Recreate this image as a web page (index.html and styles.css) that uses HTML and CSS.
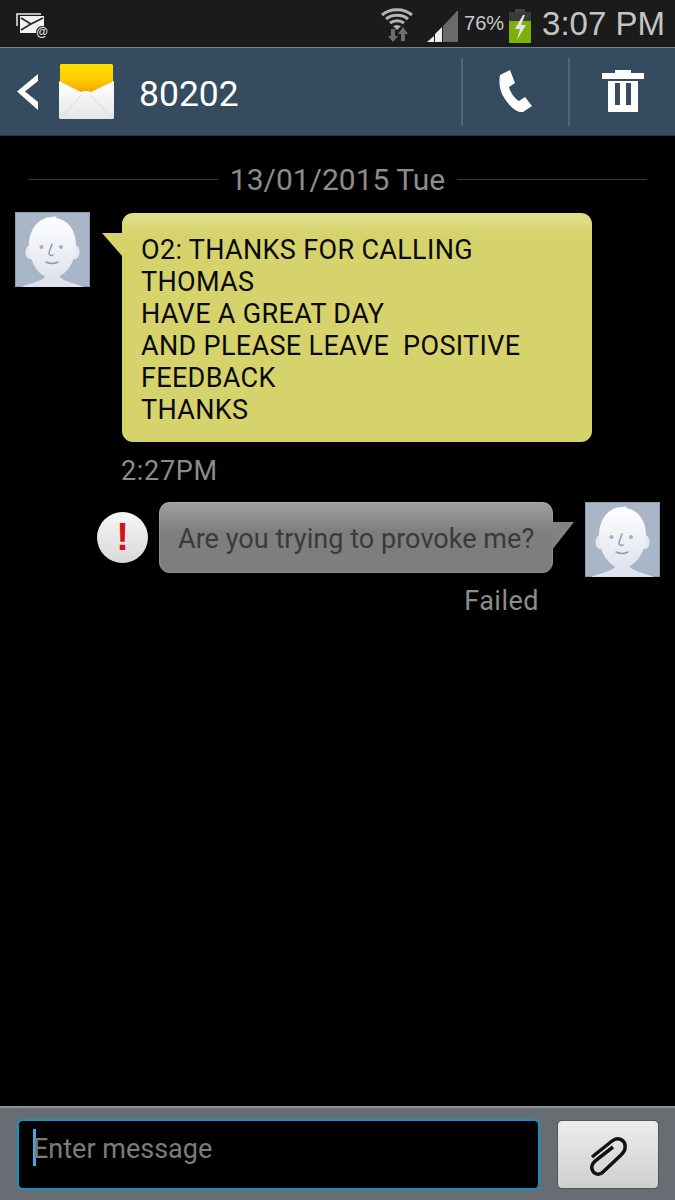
FILE: index.html
```html
<!DOCTYPE html>
<html lang="en">
<head>
  <meta charset="UTF-8" />
  <title>80202</title>
  <link rel="stylesheet" href="styles.css">
</head>
<body>
  <svg class="defs" width="0" height="0">
    <defs>
      <linearGradient id="faceGrad" x1="0" y1="0" x2="0" y2="1">
        <stop offset="0" stop-color="#ffffff"/>
        <stop offset="1" stop-color="#dfe4ee"/>
      </linearGradient>
      <symbol id="avatar" viewBox="0 0 75 75">
        <rect width="75" height="75" fill="#a9b6c8"/>
        <rect x="0.5" y="0.5" width="74" height="74" fill="none" stroke="#8f9bac"/>
        <path d="M6 75c6-3 20-5 24-10l0-6h15l0 6c4 5 18 7 24 10z" fill="#dfe4ee"/>
        <ellipse cx="15" cy="40" rx="4.5" ry="7" fill="#e4e8f0"/>
        <ellipse cx="60" cy="40" rx="4.5" ry="7" fill="#e4e8f0"/>
        <path d="M37 5c3 0 4-1 5-1c-1 1-1 1-1 2c12 2 20 12 20 27c0 17-11 33-24 33s-23-16-23-33c0-16 10-28 23-28z" fill="url(#faceGrad)"/>
        <circle cx="26.500" cy="35" r="2" fill="#9fb0c6"/>
        <circle cx="46" cy="35" r="2" fill="#9fb0c6"/>
        <path d="M37 32c-1 4-3 7-3 9c0 2 2 3 4 2M31 50c4 2 8 2 12 0" fill="none" stroke="#8c9db5" stroke-width="1.500" stroke-linecap="round"/>
      </symbol>
    </defs>
  </svg>

  <div class="phone">
    <div class="status-bar">
      <svg class="ic-notify" width="34" height="26" viewBox="0 0 34 26">
        <path d="M1 14V2h24" fill="none" stroke="#eee" stroke-width="1.500"/>
        <rect x="4" y="4" width="24" height="17" fill="#f2f2f2"/>
        <path d="M5 6l10 6l-10 6M27 6l-12 6" fill="none" stroke="#222" stroke-width="1.500"/>
        <circle cx="26" cy="20" r="6" fill="#1b1b1b"/>
        <text x="26" y="24" class="at-sign">@</text>
      </svg>
      <div class="status-right">
        <svg class="ic-wifi" width="34" height="36" viewBox="0 0 34 36">
          <path d="M2 8c8-7 22-7 30 0M6 12c6-5 16-5 22 0M10 16c4-3 10-3 14 0" fill="none" stroke="#b5b5b5" stroke-width="3"/>
          <path d="M13 19l4-1l4 1l-4 4z" fill="#b5b5b5"/>
          <path d="M11 22h4v7h3l-5 6l-5-6h3zM21 34v-7h-3l5-7l5 7h-3v7z" fill="#6e6e6e"/>
        </svg>
        <svg class="ic-signal" width="31" height="32" viewBox="0 0 31 32">
          <path d="M0 32l7-6v6zM8 32v-8l7-7v15z" fill="#eee"/>
          <path d="M16 32v-16l15-16v32z" fill="#6a6a6a"/>
        </svg>
        <span class="battery-pct">76%</span>
        <svg class="ic-battery" width="24" height="34" viewBox="0 0 24 34">
          <rect x="7" y="0" width="10" height="4" fill="#444"/>
          <rect x="1" y="3" width="22" height="9" fill="#3a3a3a"/>
          <rect x="1" y="12" width="22" height="22" fill="#7cb00a"/>
          <path d="M15 6l-8 14h5l-3 11l9-15h-5l4-10z" fill="#e4e4e4"/>
        </svg>
        <span class="clock">3:07 PM</span>
      </div>
    </div>

    <div class="action-bar">
      <svg class="ic-back" width="24" height="38" viewBox="0 0 24 38">
        <path d="M22 1v7L9 18.500 22 29v8L1 18.500z" fill="#fff"/>
      </svg>
      <svg class="ic-app" width="55" height="55" viewBox="0 0 55 55">
        <defs>
          <linearGradient id="envYellow" x1="0" y1="0" x2="0" y2="1">
            <stop offset="0" stop-color="#ffe000"/>
            <stop offset="0.55" stop-color="#fdcb00"/>
            <stop offset="1" stop-color="#f2a500"/>
          </linearGradient>
          <linearGradient id="envWhite" x1="0" y1="0" x2="0" y2="1">
            <stop offset="0" stop-color="#ffffff"/>
            <stop offset="1" stop-color="#e6e6e6"/>
          </linearGradient>
        </defs>
        <path d="M2 0h51l1 1v17l-22 11h-10L1 18V1z" fill="url(#envYellow)"/>
        <path d="M0 17l22 11q5-2 10 0l23-11v37l-1 1H1l-1-1z" fill="url(#envWhite)"/>
        <path d="M3 53l19-22M52 53l-20-22" stroke="#dcdcdc" fill="none"/>
      </svg>
      <span class="contact">80202</span>
      <div class="bar-btn">
        <svg width="33" height="43" viewBox="0 0 33 43">
          <path d="M1 5L11 0l5 13l-6 4c1 5 6 12 10 14l6-4l7 9l-9 6C16 43 7 32 3 24C0 17 0 10 1 5z" fill="#fff"/>
        </svg>
      </div>
      <div class="bar-btn">
        <svg width="42" height="43" viewBox="0 0 42 43">
          <path d="M13 0h16v3h13v6H0V3h13z" fill="#fff"/>
          <path d="M6 11h30v31H6zM13 13v22h5V13zM24 13v22h5V13z" fill="#fff" fill-rule="evenodd"/>
        </svg>
      </div>
    </div>

    <div class="thread">
      <div class="date-row">
        <span class="date-line"></span>
        <span class="date-text">13/01/2015 Tue</span>
        <span class="date-line"></span>
      </div>

      <div class="msg msg-in">
        <svg class="avatar" width="75" height="75"><use href="#avatar"/></svg>
        <div class="msg-col">
          <div class="bubble bubble-in">
            O2: THANKS FOR CALLING<br>
            THOMAS<br>
            HAVE A GREAT DAY<br>
            AND PLEASE LEAVE&nbsp; POSITIVE<br>
            FEEDBACK<br>
            THANKS
          </div>
          <div class="msg-time">2:27PM</div>
        </div>
      </div>

      <div class="msg msg-out">
        <div class="msg-col-out">
          <div class="out-row">
            <div class="alert-icon">!</div>
            <div class="bubble bubble-out">Are you trying to provoke me?</div>
          </div>
          <div class="msg-failed">Failed</div>
        </div>
        <svg class="avatar" width="75" height="75"><use href="#avatar"/></svg>
      </div>
    </div>

    <div class="compose">
      <div class="compose-input"><span class="caret"></span><span class="placeholder">Enter message</span></div>
      <div class="attach-btn">
        <svg class="ic-clip" width="37" height="40" viewBox="0 0 37 40">
          <path d="M2 21L22 5C28 0 36 4 35 12C35 15 33 17 31 19L13 36C9 40 3 38 2 33C1 30 3 27 5 25L23 11" fill="none" stroke="#111" stroke-width="3.500"/>
        </svg>
      </div>
    </div>
  </div>
</body>
</html>
```

FILE: styles.css
```css
html, body {
  margin: 0;
  padding: 0;
  background: #000;
}
.defs {
  display: block;
  height: 0;
}
.phone {
  width: 675px;
  height: 1200px;
  display: flex;
  flex-direction: column;
  font-family: Roboto, "Liberation Sans", sans-serif;
  overflow: hidden;
}

/* status bar */
.status-bar {
  height: 47px;
  flex: none;
  background: #1b1b1b;
  display: flex;
  align-items: center;
  justify-content: space-between;
  padding: 0 10px 0 16px;
}
.ic-notify {
  margin-top: 2px;
}
.at-sign {
  font-family: "Liberation Sans", sans-serif;
  font-size: 12px;
  font-weight: bold;
  fill: #e0e0e0;
  text-anchor: middle;
}
.status-right {
  display: flex;
  align-items: center;
}
.ic-wifi {
  margin-right: 13px;
  margin-top: 2px;
}
.ic-signal {
  margin-right: 6px;
  margin-top: 4px;
}
.battery-pct {
  font-family: "Liberation Sans", sans-serif;
  font-size: 20px;
  color: #c8c8c8;
  margin-right: 4px;
}
.ic-battery {
  margin-top: 4px;
  margin-right: 10px;
}
.clock {
  font-family: "Liberation Sans", sans-serif;
  font-size: 33px;
  color: #c4c4c4;
}

/* action bar */
.action-bar {
  height: 89px;
  flex: none;
  box-sizing: border-box;
  background: #344b60;
  border-top: 1px solid #6d8296;
  border-bottom: 1px solid #23333f;
  display: flex;
  align-items: center;
  padding-left: 16px;
}
.ic-back {
  flex: none;
  margin-right: 19px;
}
.ic-app {
  flex: none;
  margin-right: 25px;
}
.contact {
  font-size: 35.5px;
  color: #fff;
  flex: 1;
  margin-top: 4px;
}
.bar-btn {
  width: 107px;
  height: 68px;
  display: flex;
  align-items: center;
  justify-content: center;
  border-left: 2px solid #4f6579;
  box-sizing: border-box;
  flex: none;
}

/* messages */
.thread {
  flex: 1;
  background: #000;
  padding: 0 15px;
}
.date-row {
  display: flex;
  align-items: center;
  gap: 12px;
  margin: 25px 13px 0;
  height: 36px;
}
.date-line {
  flex: 1;
  height: 1px;
  background: #3a3a3a;
}
.date-text {
  font-size: 30px;
  color: #8c8c8c;
}
.msg {
  display: flex;
  align-items: flex-start;
}
.msg-in {
  margin-top: 15px;
}
.msg-out {
  margin-top: 15px;
  justify-content: flex-end;
}
.msg-col {
  margin-left: 32px;
  margin-top: 1px;
}
.bubble {
  position: relative;
  box-sizing: border-box;
  font-size: 27px;
  line-height: 32px;
  border-radius: 11px;
}
.bubble-in {
  width: 470px;
  height: 229px;
  padding: 21px 19px;
  color: #0a0a0a;
  letter-spacing: 0.33px;
  background: linear-gradient(#e2de8c 0, #d6d36c 22px, #d6d36c 100%);
}
.bubble-in::before {
  content: "";
  position: absolute;
  left: -20px;
  top: 20px;
  width: 21px;
  height: 24px;
  background: #d6d36c;
  clip-path: polygon(0 0, 100% 0, 100% 100%);
}
.msg-time {
  font-size: 27px;
  line-height: 32px;
  letter-spacing: 0.7px;
  color: #8c8c8c;
  margin: 13px 0 0 -1px;
}
.msg-col-out {
  display: flex;
  flex-direction: column;
  align-items: flex-end;
  margin-right: 32px;
}
.out-row {
  display: flex;
  align-items: center;
}
.alert-icon {
  width: 51px;
  height: 51px;
  border-radius: 50%;
  background: linear-gradient(#f6f6f6, #d8d8d8);
  color: #d8101a;
  font-family: "Liberation Sans", sans-serif;
  font-weight: bold;
  font-size: 38px;
  line-height: 51px;
  text-align: center;
  margin-right: 11px;
}
.bubble-out {
  width: 394px;
  height: 71px;
  padding: 21px 19px;
  color: #3a3a3a;
  white-space: nowrap;
  letter-spacing: 0.05px;
  background: linear-gradient(#a0a0a0 0, #7e7e7e 30px, #7e7e7e 100%);
  box-shadow: inset 0 0 0 1px rgba(255, 255, 255, 0.12);
}
.bubble-out::after {
  content: "";
  position: absolute;
  right: -21px;
  top: 20px;
  width: 22px;
  height: 28px;
  background: #838383;
  clip-path: polygon(0 0, 100% 0, 0 100%);
}
.msg-failed {
  font-size: 27px;
  line-height: 32px;
  letter-spacing: 0.5px;
  color: #8c8c8c;
  margin: 12px 14px 0 0;
}

/* compose */
.compose {
  height: 94px;
  flex: none;
  box-sizing: border-box;
  background: #676d73;
  border-top: 2px solid #8f9396;
  display: flex;
  align-items: center;
  gap: 17px;
  padding: 0 16px 0 17px;
}
.compose-input {
  width: 523px;
  height: 71px;
  margin-top: 1px;
  box-sizing: border-box;
  background: #000;
  border: 2px solid #1a8fc0;
  border-radius: 6px;
  display: flex;
  padding: 8px 0 0 14px;
}
.caret {
  width: 3px;
  height: 37px;
  background: #3fa9f5;
  flex: none;
}
.placeholder {
  font-size: 27px;
  line-height: 38px;
  color: #7c7c7c;
  margin: 1px 0 0 -3px;
}
.attach-btn {
  width: 102px;
  height: 69px;
  box-sizing: border-box;
  background: linear-gradient(#ececec, #cfcfcf);
  border-radius: 5px;
  border: 1px solid #50565c;
  display: flex;
  align-items: center;
  justify-content: center;
}
.ic-clip {
  margin-top: 3px;
}
```
